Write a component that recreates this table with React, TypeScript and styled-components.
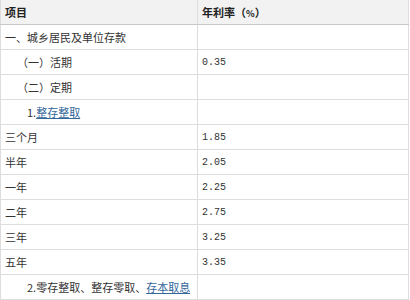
import styled, { createGlobalStyle } from 'styled-components';

const GlobalStyle = createGlobalStyle`
  html, body {
    margin: 0;
    padding: 0;
    background: #ffffff;
  }
  body {
    font-family: 'Noto Sans CJK SC', 'Noto Sans', sans-serif;
    font-size: 11px;
    color: #333333;
  }
`;

const Table = styled.table`
  width: 409px;
  border-collapse: collapse;
  table-layout: fixed;
  border-left: 1px solid #dddddd;
  border-right: 1px solid #dddddd;
`;

const HeadCell = styled.th`
  height: 24px;
  padding: 0 4px;
  text-align: left;
  font-weight: bold;
  font-size: 11px;
  color: #222222;
  background: #f2f2f2;
  border-bottom: 1px solid #c8c8c8;
  border-right: 1px solid #dddddd;
  &:first-child {
    width: 188px;
  }
`;

const Cell = styled.td<{ indent?: number; mono?: boolean }>`
  height: 24px;
  padding: 0 4px 0 ${({ indent }) => 4 + (indent || 0)}px;
  border-bottom: 1px solid #dddddd;
  border-right: 1px solid #dddddd;
  white-space: nowrap;
  font-family: ${({ mono }) =>
    mono
      ? "'Liberation Mono', 'DejaVu Sans Mono', monospace"
      : "'Noto Sans CJK SC', 'Noto Sans', sans-serif"};
  font-size: ${({ mono }) => (mono ? '10px' : '11px')};
  color: #333333;
`;

const Link = styled.a`
  color: #336699;
  text-decoration: underline;
`;

const Unit = styled.span`
  font-size: 9px;
`;

interface RateRow {
  label: React.ReactNode;
  rate?: string;
  indent?: number;
}

const rows: RateRow[] = [
  { label: '一、城乡居民及单位存款' },
  { label: '（一）活期', rate: '0.35', indent: 12 },
  { label: '（二）定期', indent: 12 },
  {
    label: (
      <>
        1.<Link href="#">整存整取</Link>
      </>
    ),
    indent: 22,
  },
  { label: '三个月', rate: '1.85' },
  { label: '半年', rate: '2.05' },
  { label: '一年', rate: '2.25' },
  { label: '二年', rate: '2.75' },
  { label: '三年', rate: '3.25' },
  { label: '五年', rate: '3.35' },
  {
    label: (
      <>
        2.零存整取、整存零取、<Link href="#">存本取息</Link>
      </>
    ),
    indent: 22,
  },
];

const App = () => {
  return (
    <>
      <GlobalStyle />
      <Table>
        <thead>
          <tr>
            <HeadCell>项目</HeadCell>
            <HeadCell>
              年利率（<Unit>%</Unit>）
            </HeadCell>
          </tr>
        </thead>
        <tbody>
          {rows.map((row, i) => (
            <tr key={i}>
              <Cell indent={row.indent}>{row.label}</Cell>
              <Cell mono>{row.rate}</Cell>
            </tr>
          ))}
        </tbody>
      </Table>
    </>
  );
};

export default App;
